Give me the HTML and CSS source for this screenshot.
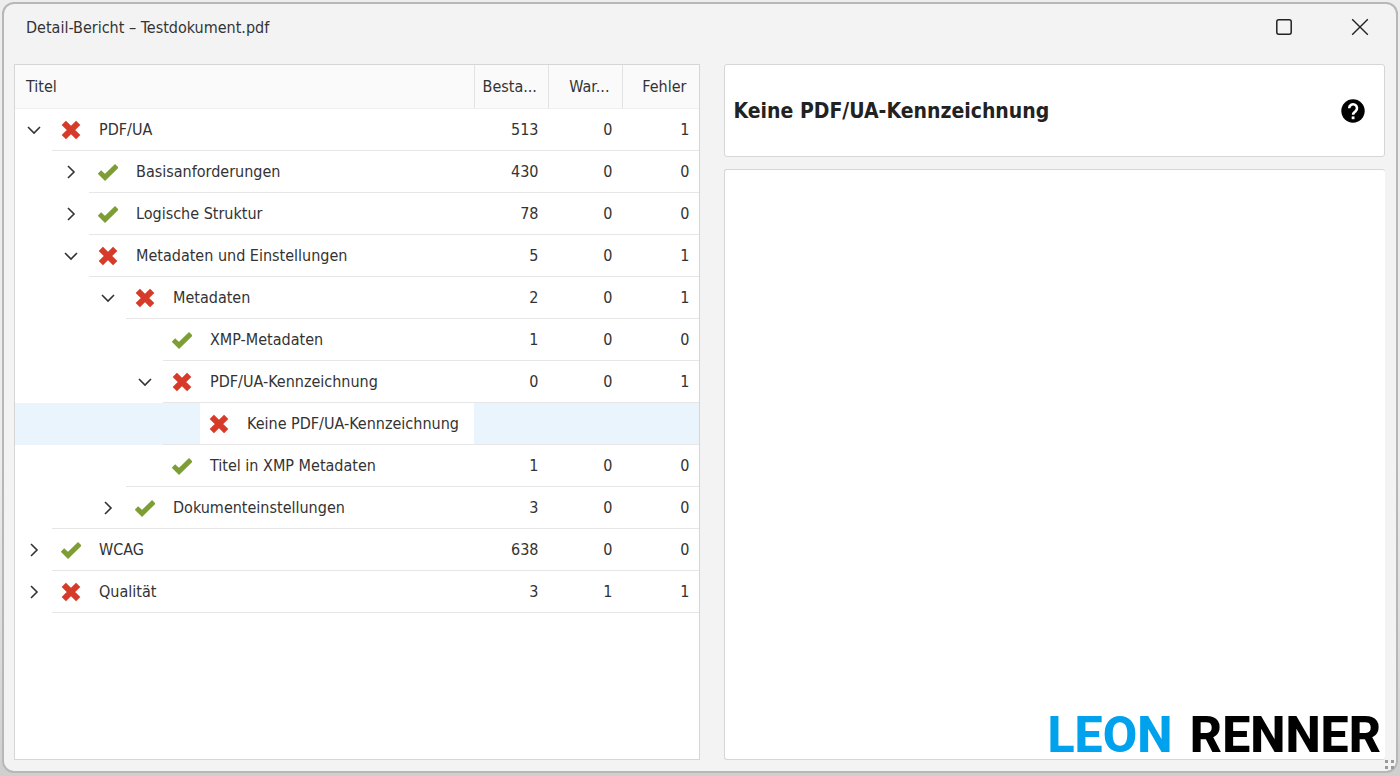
FILE: index.html
```html
<!DOCTYPE html>
<html lang="de">
<head>
  <meta charset="UTF-8">
  <title>Detail-Bericht – Testdokument.pdf</title>
  <meta name="viewport" content="width=device-width, initial-scale=1.0">
  <link rel="stylesheet" href="styles.css">
</head>
<body>
<svg class="sprite" aria-hidden="true">
  <symbol id="open" viewBox="0 0 16 16"><path d="M2 5l6 6 6-6" fill="none" stroke="#333" stroke-width="1.6"/></symbol>
  <symbol id="closed" viewBox="0 0 16 16"><path d="M5 2l6 6-6 6" fill="none" stroke="#333" stroke-width="1.6"/></symbol>
  <symbol id="fail" viewBox="0 0 20 20"><path d="M2.8 2.8l14.4 14.4M17.2 2.8L2.8 17.2" fill="none" stroke="#d63a28" stroke-width="6"/></symbol>
  <symbol id="pass" viewBox="0 0 20 20"><path d="M1.4 10l5.6 5.4L18.8 3.8" fill="none" stroke="#7d9d35" stroke-width="5"/></symbol>
</svg>

<div class="window">
  <header class="titlebar">
    <div class="window-title">Detail-Bericht – Testdokument.pdf</div>
    <button class="window-btn" aria-label="Maximieren">
      <svg viewBox="0 0 18 18"><rect x="1.8" y="1.8" width="14.4" height="14.4" rx="2" fill="none" stroke="#222" stroke-width="1.5"/></svg>
    </button>
    <button class="window-btn" aria-label="Schließen">
      <svg viewBox="0 0 18 18"><path d="M1.2 1.2l15.6 15.6M16.8 1.2L1.2 16.8" fill="none" stroke="#222" stroke-width="1.4"/></svg>
    </button>
  </header>

  <main class="content">
    <section class="panel tree-panel">
      <table class="tree">
        <thead>
          <tr>
            <th class="col-title">Titel</th>
            <th class="col-num" title="Bestanden">Besta...</th>
            <th class="col-num" title="Warnungen">War...</th>
            <th class="col-last">Fehler</th>
          </tr>
        </thead>
        <tbody>
          <tr class="level-0 line-0">
            <td><div class="node"><button class="toggle" aria-label="Zuklappen"><svg><use href="#open"/></svg></button><div class="label"><svg><use href="#fail"/></svg>PDF/UA</div></div></td>
            <td>513</td><td>0</td><td>1</td>
          </tr>
          <tr class="level-1 line-1">
            <td><div class="node"><button class="toggle" aria-label="Aufklappen"><svg><use href="#closed"/></svg></button><div class="label"><svg><use href="#pass"/></svg>Basisanforderungen</div></div></td>
            <td>430</td><td>0</td><td>0</td>
          </tr>
          <tr class="level-1 line-1">
            <td><div class="node"><button class="toggle" aria-label="Aufklappen"><svg><use href="#closed"/></svg></button><div class="label"><svg><use href="#pass"/></svg>Logische Struktur</div></div></td>
            <td>78</td><td>0</td><td>0</td>
          </tr>
          <tr class="level-1 line-1">
            <td><div class="node"><button class="toggle" aria-label="Zuklappen"><svg><use href="#open"/></svg></button><div class="label"><svg><use href="#fail"/></svg>Metadaten und Einstellungen</div></div></td>
            <td>5</td><td>0</td><td>1</td>
          </tr>
          <tr class="level-2 line-2">
            <td><div class="node"><button class="toggle" aria-label="Zuklappen"><svg><use href="#open"/></svg></button><div class="label"><svg><use href="#fail"/></svg>Metadaten</div></div></td>
            <td>2</td><td>0</td><td>1</td>
          </tr>
          <tr class="level-3 line-3">
            <td><div class="node"><span class="toggle"></span><div class="label"><svg><use href="#pass"/></svg>XMP-Metadaten</div></div></td>
            <td>1</td><td>0</td><td>0</td>
          </tr>
          <tr class="level-3 line-3">
            <td><div class="node"><button class="toggle" aria-label="Zuklappen"><svg><use href="#open"/></svg></button><div class="label"><svg><use href="#fail"/></svg>PDF/UA-Kennzeichnung</div></div></td>
            <td>0</td><td>0</td><td>1</td>
          </tr>
          <tr class="level-4 line-3 selected">
            <td><div class="node"><span class="toggle"></span><div class="label"><svg><use href="#fail"/></svg>Keine PDF/UA-Kennzeichnung</div></div></td>
            <td></td><td></td><td></td>
          </tr>
          <tr class="level-3 line-2">
            <td><div class="node"><span class="toggle"></span><div class="label"><svg><use href="#pass"/></svg>Titel in XMP Metadaten</div></div></td>
            <td>1</td><td>0</td><td>0</td>
          </tr>
          <tr class="level-2 line-0">
            <td><div class="node"><button class="toggle" aria-label="Aufklappen"><svg><use href="#closed"/></svg></button><div class="label"><svg><use href="#pass"/></svg>Dokumenteinstellungen</div></div></td>
            <td>3</td><td>0</td><td>0</td>
          </tr>
          <tr class="level-0 line-0">
            <td><div class="node"><button class="toggle" aria-label="Aufklappen"><svg><use href="#closed"/></svg></button><div class="label"><svg><use href="#pass"/></svg>WCAG</div></div></td>
            <td>638</td><td>0</td><td>0</td>
          </tr>
          <tr class="level-0 line-0">
            <td><div class="node"><button class="toggle" aria-label="Aufklappen"><svg><use href="#closed"/></svg></button><div class="label"><svg><use href="#fail"/></svg>Qualität</div></div></td>
            <td>3</td><td>1</td><td>1</td>
          </tr>
        </tbody>
      </table>
    </section>

    <section class="details">
      <div class="panel details-head">
        <h1>Keine PDF/UA-Kennzeichnung</h1>
        <button class="help-btn" aria-label="Hilfe">
          <svg viewBox="0 0 24 24">
            <circle cx="12" cy="12" r="11.7"/>
            <path d="M8.2 9.2a3.9 3.9 0 1 1 6.4 3c-1.5 1.2-2.5 1.8-2.5 3.6" fill="none" stroke="#fff" stroke-width="2.6"/>
            <rect x="10.7" y="17.4" width="2.8" height="2.8" fill="#fff"/>
          </svg>
        </button>
      </div>
      <div class="panel details-body"></div>
    </section>
  </main>

  <svg class="grip" viewBox="0 0 10 10" aria-hidden="true"><path d="M0 0h3v3H0zM6 0h3v3H6zM0 6h3v3H0zM6 6h3v3H6z" fill="#999"/></svg>
</div>

<div class="brand"><span>LEON</span> RENNER</div>
</body>
</html>
```
FILE: styles.css
```css
* {
  box-sizing: border-box;
}
html, body {
  height: 100%;
  margin: 0;
}
body {
  position: relative;
  padding: 2px 2px 3px;
  background: linear-gradient(#ededed 60%, #cfcfcf);
  font-family: Tahoma, "DejaVu Sans Condensed", "Noto Sans", sans-serif;
  font-size: 16px;
  color: #333;
}
button {
  padding: 0;
  border: none;
  background: none;
  cursor: pointer;
}
svg {
  display: block;
}
.sprite {
  display: none;
}

.window {
  position: relative;
  display: flex;
  flex-direction: column;
  height: 100%;
  border: 2px solid #b5b8b6;
  border-radius: 12px;
  background: #f3f3f3;
}
.titlebar {
  display: flex;
  align-items: center;
  height: 46px;
  padding: 0 13px 0 22px;
}
.window-title {
  flex: 1;
}
.window-btn {
  display: flex;
  align-items: center;
  justify-content: center;
  width: 46px;
  height: 36px;
  margin-left: 30px;
}
.window-btn svg {
  width: 18px;
  height: 18px;
}

.content {
  flex: 1;
  display: grid;
  grid-template-columns: 685fr 661fr;
  gap: 24px;
  min-height: 0;
  padding: 14px 11px 11px 10px;
}
.panel {
  background: #fff;
  border: 1px solid #d6d6d6;
  border-radius: 3px;
}
.tree-panel {
  border-radius: 0;
  overflow: auto;
}

.tree {
  width: 100%;
  table-layout: fixed;
  border-collapse: separate;
  border-spacing: 0;
}
.tree th {
  height: 44px;
  padding: 0 12px 0 11px;
  background: #fafafa;
  border-bottom: 1px solid #f0f0f0;
  border-left: 1px solid #e2e2e2;
  font-weight: 400;
  text-align: right;
  white-space: nowrap;
}
.tree .col-title {
  border-left: none;
  text-align: left;
}
.tree .col-num {
  width: 74px;
  padding-left: 8px;
}
.tree .col-last {
  width: 77px;
}
.tree td {
  height: 42px;
  padding: 0 9px;
  border-bottom: 1px solid #e6e6e6;
  text-align: right;
}
/* the separator of the title column starts at the indent */
.tree td:first-child {
  padding: 0;
  border-bottom: none;
  vertical-align: top;
  background: linear-gradient(#e6e6e6, #e6e6e6) no-repeat var(--line) bottom / 100% 1px;
}

.level-0 { --indent: 0px; }
.level-1 { --indent: 37px; }
.level-2 { --indent: 74px; }
.level-3 { --indent: 111px; }
.level-4 { --indent: 148px; }
.line-0 { --line: 37px; }
.line-1 { --line: 74px; }
.line-2 { --line: 111px; }
.line-3 { --line: 148px; }

.node {
  display: flex;
  height: 41px;
  padding-left: var(--indent);
}
.toggle {
  display: flex;
  align-items: center;
  justify-content: center;
  flex: none;
  width: 37px;
}
.toggle svg {
  width: 16px;
  height: 16px;
}
.label {
  flex: 1;
  display: flex;
  align-items: center;
  gap: 18px;
  padding-left: 9px;
  white-space: nowrap;
}
.label svg {
  width: 20px;
  height: 20px;
}
.selected td,
.tree .selected td:first-child {
  background-color: #e9f4fc;
}
.selected .label {
  background: #fff;
}

.details {
  display: flex;
  flex-direction: column;
  gap: 12px;
}
.details-head {
  display: flex;
  align-items: center;
  justify-content: space-between;
  height: 93px;
  padding: 0 19px 0 9px;
}
.details-head h1 {
  margin: 0;
  font-size: 21px;
  font-weight: 700;
  color: #222;
}
.help-btn svg {
  width: 24px;
  height: 24px;
}
.details-body {
  flex: 1;
  border-right: none;
}

.grip {
  position: absolute;
  right: 1px;
  bottom: 1px;
  width: 10px;
  height: 10px;
}
.brand {
  position: absolute;
  right: 19px;
  bottom: 11px;
  font-family: Roboto, sans-serif;
  font-size: 50px;
  font-weight: 800;
  line-height: 60px;
  color: #000;
}
.brand span {
  margin-right: 5px;
  color: #00a2ee;
}
```
